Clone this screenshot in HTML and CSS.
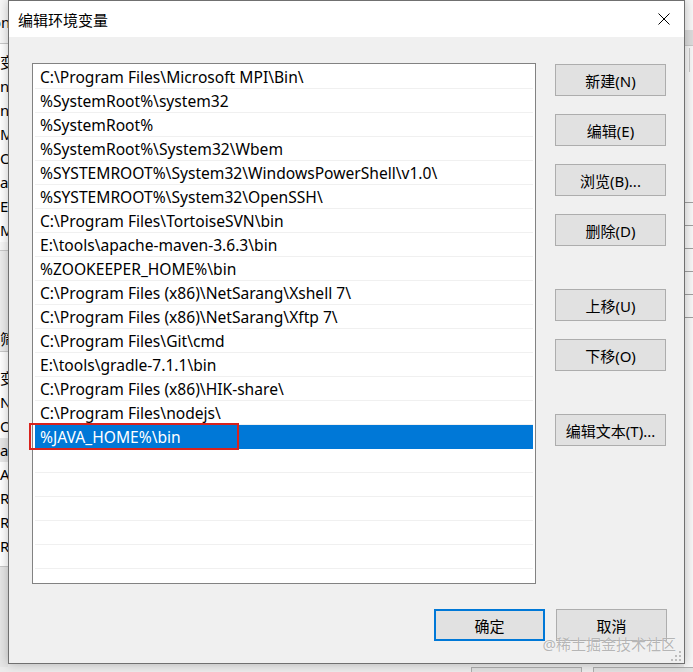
FILE: index.html
```html
<!DOCTYPE html>
<html lang="zh-CN">
<head>
  <meta charset="UTF-8">
  <title>编辑环境变量</title>
  <link rel="stylesheet" href="styles.css">
</head>
<body>
  <div class="desktop">
    <div class="desktop-main">
      <div class="behind-left">
        <div class="bl-top"><span class="cut">on</span></div>
        <div class="bl-rows">
          <div class="bl-row">变量</div>
          <div class="bl-row">nt</div>
          <div class="bl-row">nt</div>
          <div class="bl-row">MC</div>
          <div class="bl-row">Or</div>
          <div class="bl-row">a</div>
          <div class="bl-row">E</div>
          <div class="bl-row">M</div>
        </div>
        <div class="bl-gap"><span class="bl-label">筛选</span></div>
        <div class="bl-rows bl-rows-2">
          <div class="bl-row">变量</div>
          <div class="bl-row">NU</div>
          <div class="bl-row">OS</div>
          <div class="bl-row bl-row-shade">a</div>
          <div class="bl-row">A</div>
          <div class="bl-row">R</div>
          <div class="bl-row">R</div>
          <div class="bl-row">R</div>
        </div>
        <div class="bl-bottom"></div>
      </div>
      <div class="behind-mid"></div>
      <div class="behind-right">
        <div class="br-band"></div>
        <div class="br-scroll"></div>
        <div class="br-list">
          <div class="br-line"></div>
          <div class="br-line"></div>
          <div class="br-line"></div>
          <div class="br-line"></div>
          <div class="br-line"></div>
          <div class="br-line"></div>
        </div>
      </div>
    </div>
    <div class="desktop-foot">
      <div class="bm-btn"></div>
      <div class="bm-btn bm-btn-last"></div>
    </div>
  </div>

  <div class="dialog">
    <div class="titlebar">
      <span class="title">编辑环境变量</span>
      <svg class="close" viewBox="0 0 12 12">
        <path d="M0.5 0.5 L11.5 11.5 M11.5 0.5 L0.5 11.5" stroke="#000" stroke-width="1" fill="none" />
      </svg>
    </div>
    <div class="content">
      <div class="listbox">
        <div class="item">C:\Program Files\Microsoft MPI\Bin\</div>
        <div class="item">%SystemRoot%\system32</div>
        <div class="item">%SystemRoot%</div>
        <div class="item">%SystemRoot%\System32\Wbem</div>
        <div class="item">%SYSTEMROOT%\System32\WindowsPowerShell\v1.0\</div>
        <div class="item">%SYSTEMROOT%\System32\OpenSSH\</div>
        <div class="item">C:\Program Files\TortoiseSVN\bin</div>
        <div class="item">E:\tools\apache-maven-3.6.3\bin</div>
        <div class="item">%ZOOKEEPER_HOME%\bin</div>
        <div class="item">C:\Program Files (x86)\NetSarang\Xshell 7\</div>
        <div class="item">C:\Program Files (x86)\NetSarang\Xftp 7\</div>
        <div class="item">C:\Program Files\Git\cmd</div>
        <div class="item">E:\tools\gradle-7.1.1\bin</div>
        <div class="item">C:\Program Files (x86)\HIK-share\</div>
        <div class="item">C:\Program Files\nodejs\</div>
        <div class="item selected">%JAVA_HOME%\bin<span class="highlight-box"></span></div>
        <div class="item"></div>
        <div class="item"></div>
        <div class="item"></div>
        <div class="item"></div>
        <div class="item"></div>
      </div>
      <div class="side-buttons">
        <button class="btn">新建(N)</button>
        <button class="btn">编辑(E)</button>
        <button class="btn">浏览(B)...</button>
        <button class="btn">删除(D)</button>
        <button class="btn btn-group">上移(U)</button>
        <button class="btn">下移(O)</button>
        <button class="btn btn-group">编辑文本(T)...</button>
      </div>
    </div>
    <div class="footer">
      <button class="btn btn-default">确定</button>
      <button class="btn">取消</button>
    </div>
    <span class="watermark">@稀土掘金技术社区</span>
    <svg class="grip" viewBox="0 0 10 10">
      <rect x="8" y="0" width="2" height="2" fill="#bcbcbc" />
      <rect x="4" y="4" width="2" height="2" fill="#bcbcbc" />
      <rect x="8" y="4" width="2" height="2" fill="#bcbcbc" />
      <rect x="0" y="8" width="2" height="2" fill="#bcbcbc" />
      <rect x="4" y="8" width="2" height="2" fill="#bcbcbc" />
      <rect x="8" y="8" width="2" height="2" fill="#bcbcbc" />
    </svg>
  </div>
</body>
</html>
```

FILE: styles.css
```css
html, body {
  margin: 0;
  padding: 0;
  width: 693px;
  height: 672px;
  overflow: hidden;
  background: #f0f0f0;
  font-family: "Noto Sans", "Noto Sans CJK SC", sans-serif;
  font-size: 15px;
  color: #000;
}
body {
  position: relative;
}

/* window lying behind the dialog */
.desktop {
  display: flex;
  flex-direction: column;
  height: 672px;
}
.desktop-main {
  flex: 1;
  display: flex;
}
.behind-left {
  width: 8px;
  overflow: hidden;
  background: #f7f7f7;
  display: flex;
  flex-direction: column;
  white-space: nowrap;
}
.bl-top {
  height: 43px;
  border-bottom: 1px solid #c8c8c8;
  line-height: 44px;
}
.cut {
  margin-left: -8px;
}
.bl-rows {
  padding-top: 6px;
  background: #fff;
}
.bl-row {
  height: 24px;
  line-height: 24px;
}
.bl-row-shade {
  background: #e8e8e8;
}
.bl-gap {
  height: 100px;
  margin-top: 8px;
  border-top: 1px solid #c8c8c8;
  border-bottom: 1px solid #c8c8c8;
  background: #ececec;
  display: flex;
  align-items: flex-end;
}
.bl-label {
  line-height: 24px;
}
.bl-rows-2 {
  padding-top: 14px;
  height: 200px;
  border-bottom: 1px solid #c8c8c8;
}
.bl-bottom {
  flex: 1;
  background: #e6e6e6;
}
.behind-mid {
  flex: 1;
  background: #ececec;
}
.behind-right {
  width: 9px;
  background: #f7f7f7;
  display: flex;
  flex-direction: column;
}
.br-band {
  height: 15px;
  margin-top: 30px;
  background: #dcdcdc;
  border-bottom: 1px solid #c8c8c8;
}
.br-scroll {
  height: 24px;
  margin: 2px 0 0 5px;
  width: 1px;
  background: #c8c8c8;
}
.br-list {
  margin-top: 130px;
  display: flex;
  flex-direction: column;
  gap: 22px;
}
.br-line {
  height: 1px;
  background: #a0a0a0;
}
.desktop-foot {
  height: 5px;
  display: flex;
  justify-content: flex-end;
  gap: 11px;
  background: #ececec;
}
.bm-btn {
  width: 111px;
  box-sizing: border-box;
  background: #e1e1e1;
  border: 1px solid #adadad;
  border-bottom: none;
}
.bm-btn-last {
  width: 100px;
  border-right: none;
}

/* dialog */
.dialog {
  position: absolute;
  left: 8px;
  top: 0;
  width: 677px;
  height: 664px;
  box-sizing: border-box;
  border: 1px solid #707070;
  background: #f0f0f0;
  box-shadow: 0 0 10px rgba(0, 0, 0, 0.25);
  display: flex;
  flex-direction: column;
}
.titlebar {
  height: 36px;
  background: #fff;
  display: flex;
  align-items: center;
  justify-content: space-between;
  padding: 0 14px 0 9px;
}
.title {
  font-size: 15px;
}
.close {
  width: 12px;
  height: 12px;
}
.content {
  display: flex;
  padding: 26px 0 0 23px;
}
.listbox {
  width: 504px;
  height: 521px;
  box-sizing: border-box;
  border: 1px solid #828282;
  background: #fff;
  padding: 1px 2px 0 2px;
}
.item {
  position: relative;
  height: 24px;
  line-height: 24px;
  box-sizing: border-box;
  border-bottom: 1px solid #f0f0f0;
  padding-left: 5px;
  font-size: 15.6px;
  white-space: nowrap;
}
.item.selected {
  background: #0078d7;
  color: #fff;
  border-bottom-color: #0078d7;
}
.highlight-box {
  position: absolute;
  left: -6px;
  top: -2px;
  width: 210px;
  height: 27px;
  box-sizing: border-box;
  border: 2px solid #d9231d;
}
.side-buttons {
  display: flex;
  flex-direction: column;
  gap: 18px;
  margin-left: 19px;
  padding-top: 1px;
}
.btn {
  width: 111px;
  height: 32px;
  box-sizing: border-box;
  background: #e1e1e1;
  border: 1px solid #adadad;
  font-family: inherit;
  font-size: 15px;
  color: #000;
  padding: 0;
}
.btn-group {
  margin-top: 25px;
}
.btn-default {
  border: 2px solid #0078d7;
}
.footer {
  display: flex;
  justify-content: flex-end;
  gap: 11px;
  padding: 25px 17px 0 0;
}
.watermark {
  position: absolute;
  right: 8px;
  bottom: 9px;
  font-size: 15px;
  color: rgba(150, 150, 150, 0.7);
  text-shadow: 0 0 1px #fff;
}
.grip {
  position: absolute;
  right: 3px;
  bottom: 2px;
  width: 10px;
  height: 10px;
}
```
